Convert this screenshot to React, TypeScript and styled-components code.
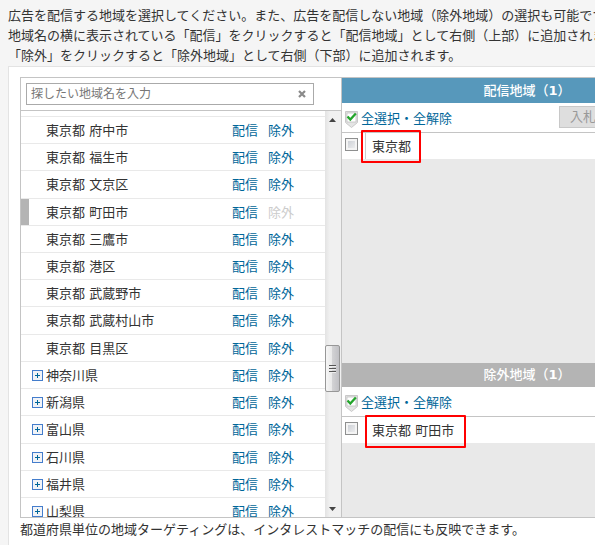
import React from "react";
import styled, { createGlobalStyle } from "styled-components";

const GlobalStyle = createGlobalStyle`
  * { box-sizing: border-box; }
  body {
    margin: 0;
    overflow: hidden;
    background: #f5f5f5;
    color: #333;
    font: 13px/20px "DejaVu Sans", "Noto Sans CJK JP", sans-serif;
  }
  button, input { font-family: inherit; }
`;

const Page = styled.main`
  min-width: 724px;
  padding: 6px 0 0 8px;
`;

const Intro = styled.p`
  margin: 0;
  white-space: nowrap;
`;

const Panel = styled.section`
  min-height: calc(100vh - 66px);
  padding: 10px 10px 20px 11px;
  border: 1px solid #e3e3e3;
  background: #fff;
`;

const Picker = styled.div`
  display: grid;
  grid-template-columns: 321px 1fr;
  border: 1px solid #c4c4c4;
`;

const Regions = styled.div`
  border-right: 1px solid #c4c4c4;
`;

const SearchBar = styled.div`
  padding: 5px;
  border-bottom: 1px solid #c4c4c4;
`;

const SearchBox = styled.div`
  display: flex;
  align-items: center;
  width: 288px;
  height: 22px;
  border: 1px solid #aaa;
  background: #fff;
`;

const SearchInput = styled.input`
  flex: 1;
  min-width: 0;
  height: 20px;
  padding: 0 4px;
  border: 0;
  outline: 0;
  background: transparent;
  font-size: 12px;
  &::placeholder { color: #777; opacity: 1; }
`;

const IconButton = styled.button`
  display: flex;
  align-items: center;
  justify-content: center;
  flex: none;
  padding: 0;
  border: 0;
  background: none;
`;

const ClearButton = styled(IconButton)`
  width: 22px;
  height: 20px;
`;

const ListArea = styled.div`
  display: grid;
  grid-template-columns: 1fr 16px;
  height: 406px;
`;

const RegionList = styled.ul`
  display: grid;
  grid-template-rows: 6px repeat(14, minmax(0, 1fr)) 19px;
  margin: 0;
  padding: 0;
  list-style: none;
  overflow: hidden;
`;

const RegionRow = styled.li<{ $excluded?: boolean }>`
  display: grid;
  grid-template-columns: 25px 1fr 36px 57px;
  overflow: hidden;
  border-bottom: 1px solid #e9e9e9;
  line-height: 28px;
  &:last-child { border-bottom: 0; }
  background: linear-gradient(#b4b4b4, #b4b4b4) no-repeat 0 0 / ${(p) => (p.$excluded ? "8px 100%" : "0 0")};
`;

const ExpandButton = styled(IconButton)`
  width: 11px;
  height: 11px;
  margin: 8px 0 0 11px;
`;

const Link = styled.a<{ $disabled?: boolean }>`
  color: ${(p) => (p.$disabled ? "#ccc" : "#006699")};
  text-decoration: none;
`;

const ScrollTrack = styled.div`
  display: flex;
  flex-direction: column;
  align-items: center;
  padding: 7px 1px 6px 0;
  background: linear-gradient(90deg, #e3e3e3, #f0f0f0 30%, #f0f0f0);
`;

const Thumb = styled.div`
  display: flex;
  align-items: center;
  justify-content: center;
  width: 15px;
  height: 47px;
  margin: 223px 0 auto;
  border: 1px solid #979797;
  border-radius: 2px;
  background: linear-gradient(90deg, #f6f6f6, #e8e8e8 48%, #d2d2d4 50%, #c0c0c4);
`;

const Selections = styled.div`
  display: grid;
  grid-template-rows: 285fr 154fr;
  background: #e9e9e9;
`;

const GroupTitle = styled.h2<{ $tone: "target" | "excluded" }>`
  margin: 0;
  background: ${(p) => (p.$tone === "target" ? "#5798bb" : "#b4b4b4")};
  color: #fff;
  font-size: 13px;
  font-weight: 500;
  line-height: ${(p) => (p.$tone === "target" ? "25px" : "24px")};
  text-align: center;
`;

const SelectAllRow = styled.div`
  display: flex;
  align-items: center;
  justify-content: space-between;
  height: 30px;
  padding: 0 3px;
  border-bottom: 1px solid #c4c4c4;
  background: #fff;
`;

const SelectAll = styled.div`
  display: flex;
  align-items: center;
  gap: 3px;
  padding-top: 3px;
  line-height: 26px;
`;

const BidButton = styled.button`
  width: 150px;
  height: 22px;
  margin-bottom: 1px;
  padding: 0 10px;
  border: 1px solid #c8c8c8;
  background: #dedede;
  color: #999;
  font-size: 13px;
  line-height: 18px;
  text-align: left;
`;

const SelectedItem = styled.label`
  display: flex;
  height: 26px;
  padding-left: 3px;
  background: #fff;
  line-height: 28px;
`;

const Checkbox = styled.input`
  appearance: none;
  width: 13px;
  height: 13px;
  margin: 5px 7px 0 0;
  border: 1px solid #8e8f8f;
  background: linear-gradient(135deg, #c5c9d0, #f4f4f4);
  box-shadow: inset 0 0 0 2px #f4f4f4;
`;

const ItemName = styled.span`
  position: relative;
  padding-left: 6px;
  border-left: 1px solid #ccc;
`;

const Highlight = styled.span<{ $wide?: boolean }>`
  position: absolute;
  top: ${(p) => (p.$wide ? "-2px" : "-3px")};
  bottom: ${(p) => (p.$wide ? "-5px" : "-4px")};
  left: ${(p) => (p.$wide ? "-1px" : "-5px")};
  right: ${(p) => (p.$wide ? "-12px" : "-10px")};
  border: 2px solid #ff0000;
  border-radius: 1px;
  pointer-events: none;
`;

const Note = styled.p`
  margin: 2px 0 0;
`;

const PlusIcon = () => (
  <svg width="11" height="11" viewBox="0 0 11 11" aria-hidden="true">
    <rect x=".5" y=".5" width="10" height="10" fill="#f1f3f7" stroke="#447dcc" />
    <path d="M3 5.5h5M5.5 3v5" stroke="#006699" />
  </svg>
);

const ShieldCheck = () => (
  <svg width="13" height="17" viewBox="0 0 13 17" aria-hidden="true">
    <path d="M.5.5h12v11l-6 5-6-5z" fill="#e4e4e4" stroke="#c8c8c8" />
    <rect x="2" y="2" width="9" height="9" fill="#fff" stroke="#bbb" strokeWidth=".7" />
    <path d="M2.5 5.5 5.3 8.5 10.8 2.5" fill="none" stroke="#23a52b" strokeWidth="2.3" />
  </svg>
);

const Arrow = ({ down = false }: { down?: boolean }) => (
  <svg width="7" height="4" viewBox="0 0 7 4" aria-hidden="true">
    <path d={down ? "M0 0h7L3.5 4z" : "M0 4h7L3.5 0z"} fill="#444" />
  </svg>
);

const wards = ["府中市", "福生市", "文京区", "町田市", "三鷹市", "港区", "武蔵野市", "武蔵村山市", "目黒区"];
const prefectures = ["神奈川県", "新潟県", "富山県", "石川県", "福井県", "山梨県"];
const regions = [
  ...wards.map((w) => ({ name: `東京都 ${w}`, expandable: false, excluded: w === "町田市" })),
  ...prefectures.map((name) => ({ name, expandable: true, excluded: false })),
];

type GroupProps = { title: string; tone: "target" | "excluded"; item: string; bid?: boolean };

function SelectionGroup({ title, tone, item, bid }: GroupProps) {
  return (
    <section>
      <GroupTitle $tone={tone}>
        {title}（<b>1</b>）
      </GroupTitle>
      <SelectAllRow>
        <SelectAll>
          <ShieldCheck />
          <Link href="#select-all">全選択・全解除</Link>
        </SelectAll>
        {bid && <BidButton disabled>入札価格調整率設定</BidButton>}
      </SelectAllRow>
      <SelectedItem>
        <Checkbox type="checkbox" />
        <ItemName>
          {item}
          <Highlight $wide={tone === "excluded"} />
        </ItemName>
      </SelectedItem>
    </section>
  );
}

export default function App() {
  return (
    <>
      <GlobalStyle />
      <Page>
        <Intro>
          広告を配信する地域を選択してください。また、広告を配信しない地域（除外地域）の選択も可能です。
          <br />
          地域名の横に表示されている「配信」をクリックすると「配信地域」として右側（上部）に追加されます。
          <br />
          「除外」をクリックすると「除外地域」として右側（下部）に追加されます。
        </Intro>
        <Panel>
          <Picker>
            <Regions>
              <SearchBar>
                <SearchBox>
                  <SearchInput type="text" aria-label="地域名" placeholder="探したい地域名を入力" />
                  <ClearButton aria-label="クリア">
                    <svg width="8" height="8" viewBox="0 0 8 8" aria-hidden="true">
                      <path d="M1 1l6 6M7 1L1 7" stroke="#8a8a8a" strokeWidth="2.2" />
                    </svg>
                  </ClearButton>
                </SearchBox>
              </SearchBar>
              <ListArea>
                <RegionList>
                  <RegionRow aria-hidden="true" />
                  {regions.map((r) => (
                    <RegionRow key={r.name} $excluded={r.excluded}>
                      {r.expandable ? (
                        <ExpandButton aria-label={`${r.name}を展開`}>
                          <PlusIcon />
                        </ExpandButton>
                      ) : (
                        <span />
                      )}
                      <span>{r.name}</span>
                      <Link href="#target">配信</Link>
                      <Link href="#exclude" $disabled={r.excluded}>除外</Link>
                    </RegionRow>
                  ))}
                </RegionList>
                <ScrollTrack>
                  <Arrow />
                  <Thumb>
                    <svg width="7" height="9" viewBox="0 0 7 9" aria-hidden="true">
                      <path d="M0 1.5h7M0 4.5h7M0 7.5h7" stroke="#555" />
                      <path d="M0 2.5h7M0 5.5h7M0 8.5h7" stroke="#eee" />
                    </svg>
                  </Thumb>
                  <Arrow down />
                </ScrollTrack>
              </ListArea>
            </Regions>
            <Selections>
              <SelectionGroup title="配信地域" tone="target" item="東京都" bid />
              <SelectionGroup title="除外地域" tone="excluded" item="東京都 町田市" />
            </Selections>
          </Picker>
          <Note>都道府県単位の地域ターゲティングは、インタレストマッチの配信にも反映できます。</Note>
        </Panel>
      </Page>
    </>
  );
}
